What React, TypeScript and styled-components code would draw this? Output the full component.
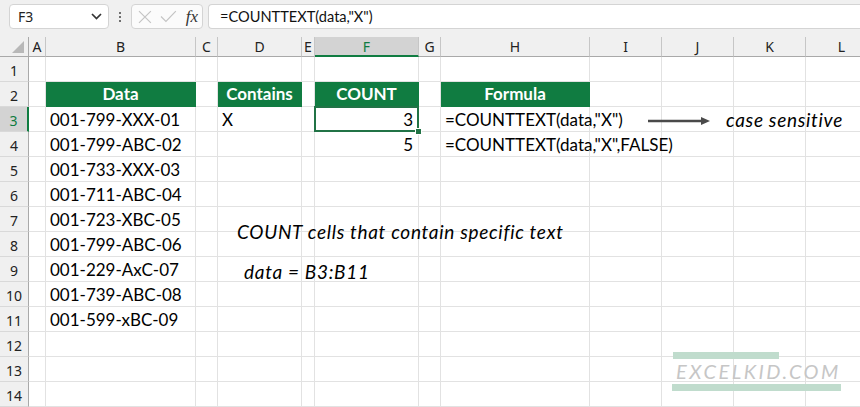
import * as React from 'react';
import styled, {createGlobalStyle, css} from 'styled-components';

const GREEN = '#107c41';

const GlobalStyle = createGlobalStyle`
	html, body {
		margin: 0;
		padding: 0;
		background: #fff;
	}
	body {
		font-family: Lato, "Liberation Sans", sans-serif;
	}
`;

const COLS = [29, 17, 150, 22, 84, 13, 104, 22, 149, 72, 72, 72, 72];
const LETTERS = ['A', 'B', 'C', 'D', 'E', 'F', 'G', 'H', 'I', 'J', 'K', 'L'];

const Window = styled.div`
	position: relative;
	width: 860px;
	height: 407px;
	overflow: hidden;
	background: #fff;
`;

const FormulaBar = styled.div`
	height: 37px;
	box-sizing: border-box;
	padding: 4px 0 0 9px;
	background: #f0f0f0;
	display: flex;
	align-items: flex-start;
`;

const NameBox = styled.div`
	width: 100px;
	height: 25px;
	box-sizing: border-box;
	border: 1px solid #d4d4d4;
	border-radius: 4px;
	background: #fff;
	display: flex;
	align-items: center;
	justify-content: space-between;
	padding: 0 6px 0 8px;
	font-family: "Noto Sans", sans-serif;
	font-size: 14px;
	color: #222;
`;

const Dots = styled.div`
	width: 22px;
	height: 25px;
	display: flex;
	flex-direction: column;
	align-items: center;
	justify-content: center;
	gap: 2px;

	span {
		width: 2px;
		height: 2px;
		background: #444;
		border-radius: 1px;
	}
`;

const FxBox = styled.div`
	width: 72px;
	height: 25px;
	box-sizing: border-box;
	border: 1px solid #d4d4d4;
	border-radius: 4px;
	background: #fbfbfb;
	display: flex;
	align-items: center;
	padding: 0 4px 0 6px;
	gap: 8px;
`;

const Fx = styled.span`
	font-family: "Liberation Serif", serif;
	font-style: italic;
	font-size: 17px;
	color: #333;
	margin-left: 1px;
`;

const FormulaInput = styled.div`
	flex: 1;
	margin-left: 5px;
	height: 25px;
	box-sizing: border-box;
	border: 1px solid #d4d4d4;
	border-right: none;
	border-radius: 4px 0 0 4px;
	background: #fff;
	padding: 0 0 0 11px;
	display: flex;
	align-items: center;
	font-size: 14.6px;
	color: #111;
`;

const Grid = styled.div`
	display: grid;
	grid-template-columns: ${COLS.map((c) => c + 'px').join(' ')};
	grid-template-rows: 20px repeat(14, 25px);
`;

const Corner = styled.div`
	box-sizing: border-box;
	background: #f0f0f0;
	border-right: 1px solid #a9a9a9;
	border-bottom: 1px solid #a9a9a9;
	display: flex;
	justify-content: flex-end;
	align-items: flex-end;
	padding: 0 4px 3px 0;

	&::after {
		content: '';
		width: 0;
		height: 0;
		border-left: 12px solid transparent;
		border-bottom: 12px solid #b8b8b8;
	}
`;

const HeaderText = css`
	box-sizing: border-box;
	background: #f0f0f0;
	font-family: "Noto Sans", sans-serif;
	font-size: 14px;
	color: #222;
	display: flex;
	align-items: center;
	justify-content: center;
`;

const ColHead: any = styled.div<{$active?: boolean}>`
	${HeaderText};
	border-right: 1px solid #c6c6c6;
	border-bottom: 1px solid #a9a9a9;
	${(p) => p.$active && css`
		background: #d3d3d3;
		color: ${GREEN};
		border-bottom: 2px solid ${GREEN};
	`}
`;

const RowHead: any = styled.div<{$active?: boolean}>`
	${HeaderText};
	padding-top: 2px;
	border-right: 1px solid #a9a9a9;
	border-bottom: 1px solid #d9d9d9;
	${(p) => p.$active && css`
		background: #d3d3d3;
		color: ${GREEN};
		border-right: 2px solid ${GREEN};
	`}
`;

const Cell: any = styled.div<{$head?: boolean; $num?: boolean; $selected?: boolean; $filled?: boolean}>`
	position: relative;
	box-sizing: border-box;
	border-right: 1px solid #e2e2e2;
	border-bottom: 1px solid #e2e2e2;
	padding: 1px 4px 0 4px;
	font-size: 17px;
	line-height: 23px;
	color: #000;
	white-space: nowrap;
	${(p) => p.$filled && css`z-index: 1;`}
	${(p) => p.$num && css`
		text-align: right;
		padding-right: 5px;
	`}
	${(p) => p.$head && css`
		background: ${GREEN};
		border-color: transparent;
		color: #fff;
		font-weight: 700;
		text-align: center;
		padding-top: 0;
	`}
	${(p) => p.$selected && css`
		z-index: 2;
		&::before {
			content: '';
			position: absolute;
			left: -1px;
			top: -1px;
			right: -1px;
			bottom: -1px;
			border: 2px solid #217346;
		}
		&::after {
			content: '';
			position: absolute;
			right: -4px;
			bottom: -4px;
			width: 5px;
			height: 5px;
			background: #217346;
			border: 1px solid #fff;
		}
	`}
`;

const Note: any = styled.div<{$x: number; $y: number}>`
	position: absolute;
	left: ${(p) => p.$x}px;
	top: ${(p) => p.$y}px;
	font-family: Lato, sans-serif;
	font-style: italic;
	font-size: 19px;
	line-height: 19px;
	letter-spacing: 0.7px;
	color: #000;
	white-space: nowrap;
	z-index: 3;
`;

const Arrow = styled.svg`
	position: absolute;
	left: 646px;
	top: 116px;
	z-index: 3;
`;

const Watermark = styled.div`
	position: absolute;
	left: 672px;
	top: 352px;
	width: 170px;
	display: flex;
	flex-direction: column;
	z-index: 3;
`;

const Bar: any = styled.div<{$w: number}>`
	width: ${(p) => p.$w}px;
	height: 7px;
	background: #c0dccd;
	margin-left: ${(p) => (p.$w > 150 ? 0 : 1)}px;
`;

const WatermarkText = styled.div`
	height: 25px;
	line-height: 25px;
	padding-left: 4px;
	font-family: Lato, sans-serif;
	font-style: italic;
	font-size: 20px;
	letter-spacing: 2.5px;
	color: #c6c6c6;
`;

type CellSpec = {text: string; head?: boolean; num?: boolean; selected?: boolean};

const DATA = [
	'001-799-XXX-01',
	'001-799-ABC-02',
	'001-733-XXX-03',
	'001-711-ABC-04',
	'001-723-XBC-05',
	'001-799-ABC-06',
	'001-229-AxC-07',
	'001-739-ABC-08',
	'001-599-xBC-09',
];

// column index: 1 = A ... 12 = L
const cells: Record<string, CellSpec> = {
	'2-2': {text: 'Data', head: true},
	'2-4': {text: 'Contains', head: true},
	'2-6': {text: 'COUNT', head: true},
	'2-8': {text: 'Formula', head: true},
	'3-4': {text: 'X'},
	'3-6': {text: '3', num: true, selected: true},
	'4-6': {text: '5', num: true},
	'3-8': {text: '=COUNTTEXT(data,"X")'},
	'4-8': {text: '=COUNTTEXT(data,"X",FALSE)'},
};
DATA.forEach((d, i) => {
	cells[`${i + 3}-2`] = {text: d};
});

const Chevron = () => (
	<svg width="11" height="7" viewBox="0 0 11 7">
		<path d="M1 1 L5.5 5.5 L10 1" fill="none" stroke="#333" strokeWidth="1.7" />
	</svg>
);

const Cross = () => (
	<svg width="14" height="14" viewBox="0 0 14 14">
		<path d="M1 1 L13 13 M13 1 L1 13" stroke="#c4c4c4" strokeWidth="1.2" />
	</svg>
);

const Check = () => (
	<svg width="17" height="13" viewBox="0 0 17 13">
		<path d="M1 6.5 L6 11.5 L16 1" fill="none" stroke="#c4c4c4" strokeWidth="1.2" />
	</svg>
);

const Sheet = () => {
	const rows = [];
	for (let r = 1; r <= 14; r++) {
		rows.push(
			<RowHead key={`rh${r}`} $active={r === 3}>{r}</RowHead>
		);
		for (let c = 1; c <= 12; c++) {
			const spec = cells[`${r}-${c}`];
			rows.push(
				<Cell
					key={`${r}-${c}`}
					$head={spec?.head}
					$num={spec?.num}
					$selected={spec?.selected}
					$filled={!!spec}
				>
					{spec?.text}
				</Cell>
			);
		}
	}
	return (
		<Grid>
			<Corner />
			{LETTERS.map((l) => (
				<ColHead key={l} $active={l === 'F'}>{l}</ColHead>
			))}
			{rows}
		</Grid>
	);
};

const App: React.FC = () => (
	<Window>
		<GlobalStyle />
		<FormulaBar>
			<NameBox>
				<span>F3</span>
				<Chevron />
			</NameBox>
			<Dots>
				<span />
				<span />
				<span />
			</Dots>
			<FxBox>
				<Cross />
				<Check />
				<Fx>fx</Fx>
			</FxBox>
			<FormulaInput>=COUNTTEXT(data,"X")</FormulaInput>
		</FormulaBar>
		<Sheet />
		<Note $x={237} $y={222}>COUNT cells that contain specific text</Note>
		<Note $x={244} $y={262}>data = B3:B11</Note>
		<Note $x={726} $y={110}>case sensitive</Note>
		<Arrow width="66" height="10" viewBox="0 0 66 10">
			<line x1="2" y1="5" x2="58" y2="5" stroke="#4a4a4a" strokeWidth="2.6" />
			<polygon points="55,1 64,5 55,9" fill="#4a4a4a" />
		</Arrow>
		<Watermark>
			<Bar $w={106} />
			<WatermarkText>EXCELKID.COM</WatermarkText>
			<Bar $w={169} />
		</Watermark>
	</Window>
);

export default App;
